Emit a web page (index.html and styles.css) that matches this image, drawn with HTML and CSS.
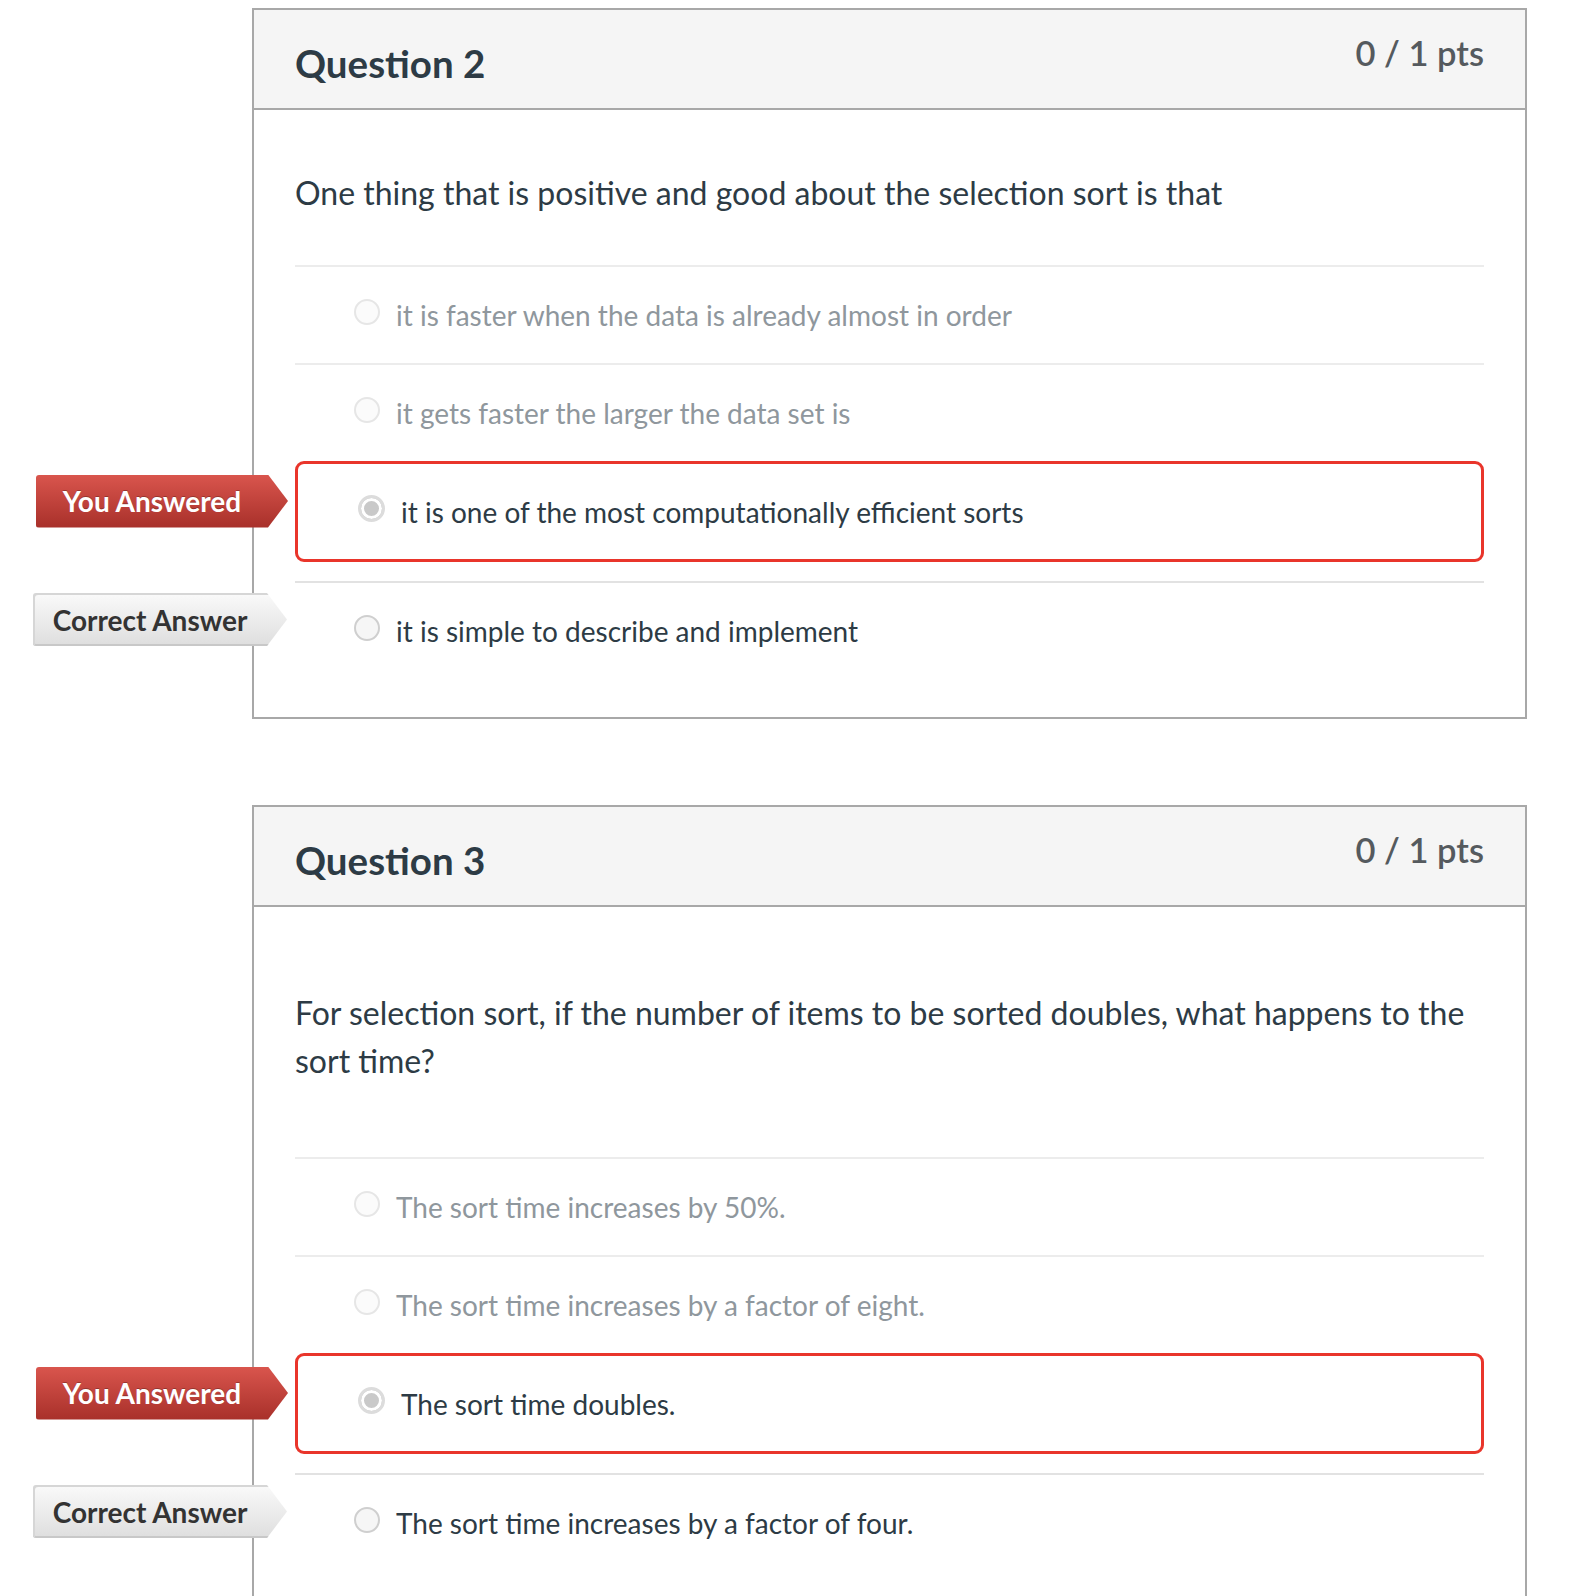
FILE: index.html
```html
<!DOCTYPE html>
<html lang="en">
<head>
<meta charset="utf-8">
<title>Quiz results</title>
<link rel="stylesheet" href="styles.css">
</head>
<body>
<main class="page">
  <section class="card">
    <header class="card-head">
      <h2 class="q-title">Question 2</h2>
      <span class="q-pts">0 / 1 pts</span>
    </header>
    <div class="card-body">
      <div class="q-text">One thing that is positive and good about the selection sort is that</div>
      <div class="answers">
        <div class="answer faded"><span class="radio"></span><span class="a-text">it is faster when the data is already almost in order</span></div>
        <div class="answer faded"><span class="radio"></span><span class="a-text">it gets faster the larger the data set is</span></div>
        <div class="answer selected"><span class="tag tag-wrong">You Answered</span><span class="radio checked"></span><span class="a-text">it is one of the most computationally efficient sorts</span></div>
        <div class="answer correct"><span class="tag tag-right">Correct Answer</span><span class="radio dark"></span><span class="a-text">it is simple to describe and implement</span></div>
      </div>
    </div>
  </section>

  <section class="card">
    <header class="card-head">
      <h2 class="q-title">Question 3</h2>
      <span class="q-pts">0 / 1 pts</span>
    </header>
    <div class="card-body">
      <div class="q-text"><p>For selection sort, if the number of items to be sorted doubles, what happens to the sort time?</p></div>
      <div class="answers">
        <div class="answer faded"><span class="radio"></span><span class="a-text">The sort time increases by 50%.</span></div>
        <div class="answer faded"><span class="radio"></span><span class="a-text">The sort time increases by a factor of eight.</span></div>
        <div class="answer selected"><span class="tag tag-wrong">You Answered</span><span class="radio checked"></span><span class="a-text">The sort time doubles.</span></div>
        <div class="answer correct"><span class="tag tag-right">Correct Answer</span><span class="radio dark"></span><span class="a-text">The sort time increases by a factor of four.</span></div>
      </div>
    </div>
  </section>
</main>
</body>
</html>
```

FILE: styles.css
```css
html, body {
  margin: 0;
  padding: 0;
  background: #ffffff;
}
body {
  font-family: Lato, "Open Sans", "Liberation Sans", sans-serif;
  color: #2d3b45;
}
.page {
  padding: 8px 0 0 252px;
  width: 1275px;
  display: flex;
  flex-direction: column;
  gap: 86px;
}
.card {
  border: 2px solid #a8a8a8;
  background: #fff;
}
.card-head {
  background: #f5f5f5;
  border-bottom: 2px solid #a8a8a8;
  height: 98px;
  padding: 0 41px;
  display: flex;
  justify-content: space-between;
  align-items: flex-start;
}
.q-title {
  margin: 0;
  padding-top: 30px;
  font-size: 38.5px;
  line-height: 46px;
  font-weight: 700;
  color: #2d3b45;
}
.q-pts {
  padding-top: 22px;
  font-size: 34.5px;
  line-height: 42px;
  font-weight: 600;
  color: #555a5e;
}
.card-body {
  padding: 0 41px 38px 41px;
}
.q-text {
  font-size: 32px;
  line-height: 48px;
  padding: 59px 0 48px 0;
  border-bottom: 2px solid #ececec;
}
.q-text p {
  margin: 23px 0 24px 0;
}
.answers {
  display: flex;
  flex-direction: column;
}
.answer {
  position: relative;
  display: flex;
  align-items: center;
  gap: 16px;
  min-height: 96px;
  padding-left: 59px;
  font-size: 28px;
  border-top: 2px solid #ececec;
}
.answer:first-child {
  border-top: none;
  min-height: 96px;
}
.answer.faded {
  color: #8f979d;
}
.answer.selected {
  border: 3px solid #e9352b;
  border-radius: 9px;
  min-height: 95px;
  padding-left: 60px;
  margin-bottom: 19px;
}
.answer.selected + .answer {
  border-top: 2px solid #e2e2e2;
}
.radio {
  width: 22px;
  height: 22px;
  border-radius: 50%;
  border: 2px solid #e6e6e6;
  background: #fbfbfb;
  flex: none;
  margin-top: -6px;
}
.radio.dark {
  border-color: #cfcfcf;
  background: #f6f6f6;
}
.radio.checked {
  border: 3px solid #dcdcdc;
  background: #c9c9c9;
  box-shadow: inset 0 0 0 3px #ffffff;
  width: 21px;
  height: 21px;
}
.a-text {
  line-height: 36px;
}
.tag {
  position: absolute;
  top: 50%;
  left: -259px;
  width: 232px;
  height: 53px;
  margin-top: -38px;
  padding-right: 20px;
  box-sizing: content-box;
  display: flex;
  align-items: center;
  justify-content: center;
  font-size: 28px;
  font-weight: 700;
  clip-path: polygon(0 0, 232px 0, 252px 50%, 232px 100%, 0 100%);
  border-radius: 3px 0 0 3px;
}
.answer.selected .tag {
  left: -262px;
  margin-top: -37px;
}
.tag-wrong {
  color: #ffffff;
  background: linear-gradient(#d9554d, #a8302a);
  text-shadow: 0 -1px 0 rgba(0,0,0,0.25);
}
.tag-right {
  color: #333333;
  left: -262px;
  width: 234px;
  background: linear-gradient(#fafafa, #dedede);
  clip-path: polygon(0 0, 234px 0, 254px 50%, 234px 100%, 0 100%);
  box-shadow: inset 2px 2px 0 #d6d6d6, inset 0 -2px 0 #c8c8c8;
}
```
